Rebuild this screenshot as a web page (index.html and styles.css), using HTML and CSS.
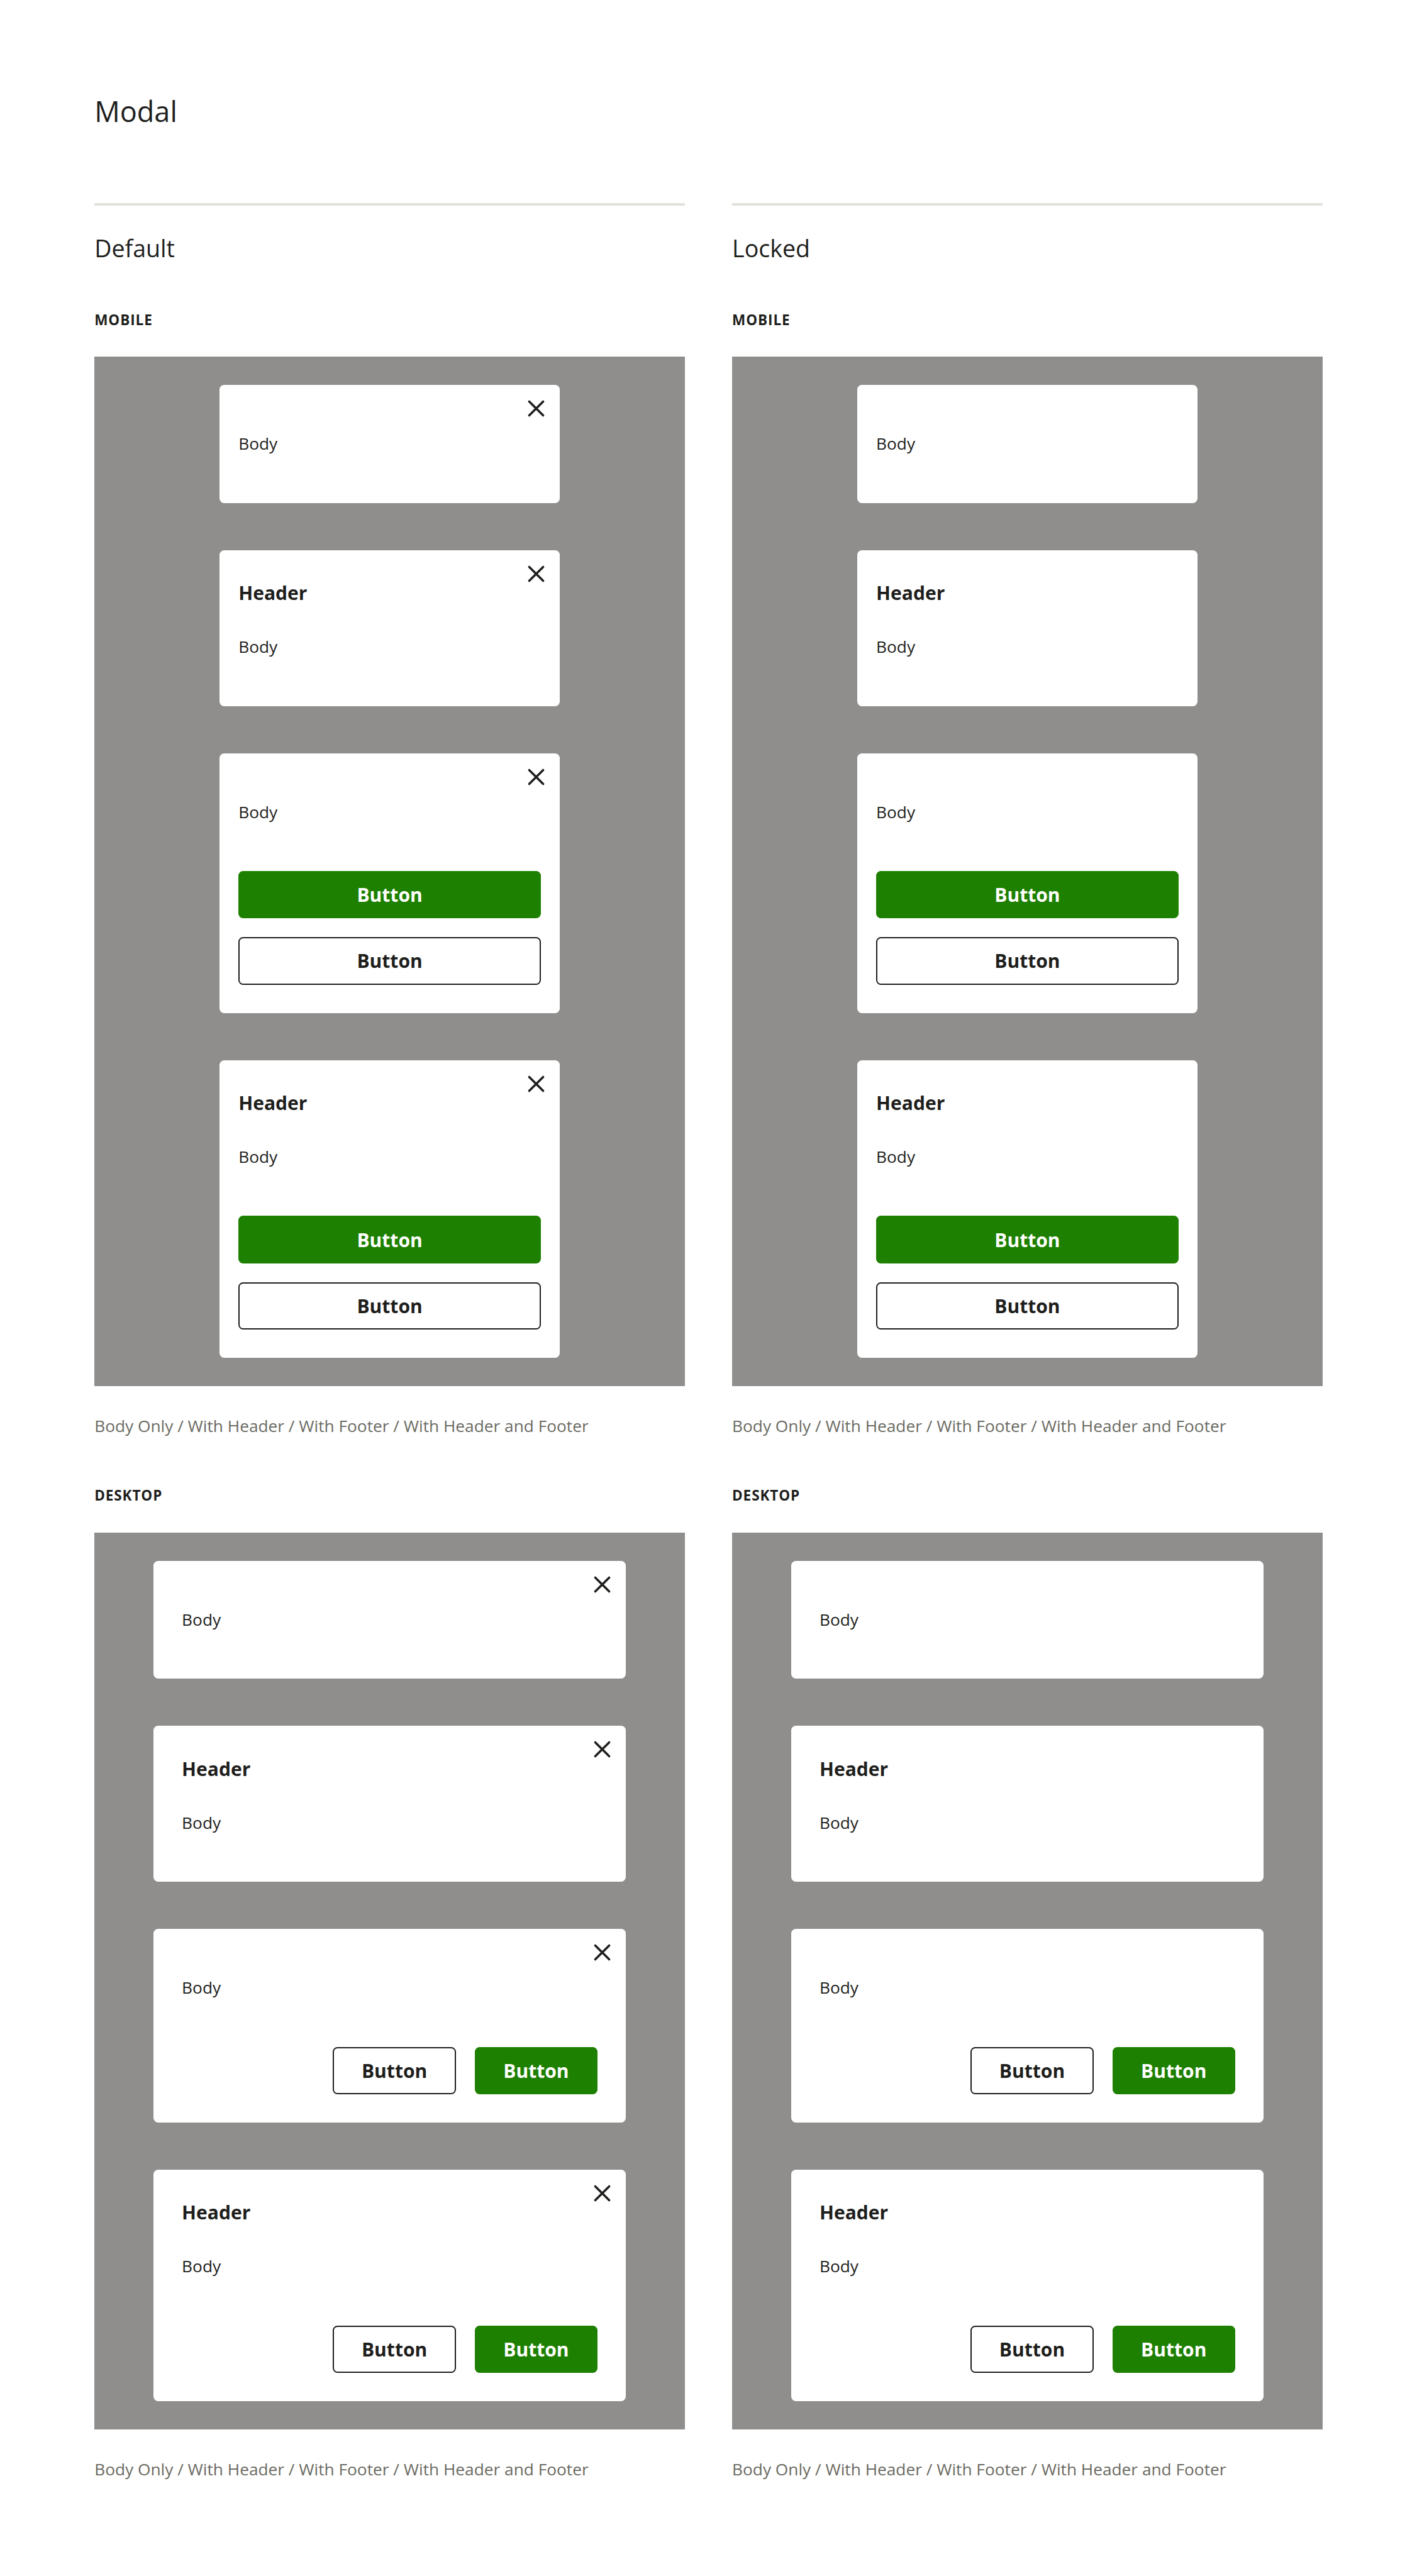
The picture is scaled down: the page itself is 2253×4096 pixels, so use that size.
FILE: index.html
```html
<!DOCTYPE html>
<html lang="en">
<head>
<meta charset="utf-8">
<title>Modal</title>
<link rel="stylesheet" href="styles.css">
</head>
<body>
<svg class="sprite" aria-hidden="true">
  <symbol id="close" viewBox="0 0 24 24">
    <path d="M6.1 6.1 17.9 17.9M17.9 6.1 6.1 17.9" fill="none" stroke="currentColor" stroke-width="1.9" stroke-linecap="round"/>
  </symbol>
</svg>
<main class="page">
  <h1 class="title">Modal</h1>
  <div class="columns">
    <section class="column">
      <h2 class="column-title">Default</h2>
      <h3 class="label">MOBILE</h3>
      <div class="stage mobile">
        <article class="modal">
          <button class="close" aria-label="Close"><svg><use href="#close"/></svg></button>
          <p class="body">Body</p>
        </article>
        <article class="modal">
          <button class="close" aria-label="Close"><svg><use href="#close"/></svg></button>
          <h4 class="header">Header</h4>
          <p class="body">Body</p>
        </article>
        <article class="modal">
          <button class="close" aria-label="Close"><svg><use href="#close"/></svg></button>
          <p class="body">Body</p>
          <footer class="footer"><button class="btn primary">Button</button><button class="btn">Button</button></footer>
        </article>
        <article class="modal">
          <button class="close" aria-label="Close"><svg><use href="#close"/></svg></button>
          <h4 class="header">Header</h4>
          <p class="body">Body</p>
          <footer class="footer"><button class="btn primary">Button</button><button class="btn">Button</button></footer>
        </article>
      </div>
      <p class="caption">Body Only / With Header / With Footer / With Header and Footer</p>
      <h3 class="label">DESKTOP</h3>
      <div class="stage desktop">
        <article class="modal">
          <button class="close" aria-label="Close"><svg><use href="#close"/></svg></button>
          <p class="body">Body</p>
        </article>
        <article class="modal">
          <button class="close" aria-label="Close"><svg><use href="#close"/></svg></button>
          <h4 class="header">Header</h4>
          <p class="body">Body</p>
        </article>
        <article class="modal">
          <button class="close" aria-label="Close"><svg><use href="#close"/></svg></button>
          <p class="body">Body</p>
          <footer class="footer"><button class="btn">Button</button><button class="btn primary">Button</button></footer>
        </article>
        <article class="modal">
          <button class="close" aria-label="Close"><svg><use href="#close"/></svg></button>
          <h4 class="header">Header</h4>
          <p class="body">Body</p>
          <footer class="footer"><button class="btn">Button</button><button class="btn primary">Button</button></footer>
        </article>
      </div>
      <p class="caption">Body Only / With Header / With Footer / With Header and Footer</p>
    </section>
    <section class="column">
      <h2 class="column-title">Locked</h2>
      <h3 class="label">MOBILE</h3>
      <div class="stage mobile">
        <article class="modal">
          <p class="body">Body</p>
        </article>
        <article class="modal">
          <h4 class="header">Header</h4>
          <p class="body">Body</p>
        </article>
        <article class="modal">
          <p class="body">Body</p>
          <footer class="footer"><button class="btn primary">Button</button><button class="btn">Button</button></footer>
        </article>
        <article class="modal">
          <h4 class="header">Header</h4>
          <p class="body">Body</p>
          <footer class="footer"><button class="btn primary">Button</button><button class="btn">Button</button></footer>
        </article>
      </div>
      <p class="caption">Body Only / With Header / With Footer / With Header and Footer</p>
      <h3 class="label">DESKTOP</h3>
      <div class="stage desktop">
        <article class="modal">
          <p class="body">Body</p>
        </article>
        <article class="modal">
          <h4 class="header">Header</h4>
          <p class="body">Body</p>
        </article>
        <article class="modal">
          <p class="body">Body</p>
          <footer class="footer"><button class="btn">Button</button><button class="btn primary">Button</button></footer>
        </article>
        <article class="modal">
          <h4 class="header">Header</h4>
          <p class="body">Body</p>
          <footer class="footer"><button class="btn">Button</button><button class="btn primary">Button</button></footer>
        </article>
      </div>
      <p class="caption">Body Only / With Header / With Footer / With Header and Footer</p>
    </section>
  </div>
</main>
</body>
</html>
```
FILE: styles.css
```css
/* 1rem is ten units of the 1200-unit wide sheet */
html {
  font-size: calc(100vw / 120);
}

*,
*::before,
*::after {
  box-sizing: border-box;
}

body {
  margin: 0;
  background: #fff;
  color: #1e1e1c;
  font-family: "Open Sans", "Noto Sans", sans-serif;
}

h1, h2, h3, h4, p {
  margin: 0;
}

.sprite {
  display: none;
}

.page {
  padding: 8.02rem 8rem 0;
}

.title {
  font-size: 2.4rem;
  line-height: 2.8rem;
  font-weight: 400;
}

.columns {
  display: grid;
  grid-template-columns: 1fr 1fr;
  gap: 4rem;
  margin-top: 6.38rem;
}

.column {
  border-top: 4px solid #e1e1db;
}

.column-title {
  margin-top: 2.26rem;
  font-size: 2rem;
  line-height: 2.8rem;
  font-weight: 400;
}

.label {
  margin: 3.82rem 0 2.3rem;
  font-size: 1.2rem;
  line-height: 1.6rem;
  font-weight: 700;
  letter-spacing: 0.04em;
}

.caption {
  margin-top: 2.4rem;
  color: #6b6b63;
  font-size: 1.4rem;
  line-height: 2rem;
}

.caption + .label {
  margin-top: 4.1rem;
}

.stage {
  display: flex;
  flex-direction: column;
  align-items: center;
  gap: 4rem;
  padding: 2.4rem 0;
  background: #8f8e8c;
}

.modal {
  position: relative;
  padding: 0 1.6rem;
  border-radius: 0.4rem;
  background: #fff;
}

.mobile .modal {
  width: 28.8rem;
}

.desktop .modal {
  width: 40rem;
  padding: 0 2.4rem;
}

.close {
  position: absolute;
  top: 0.8rem;
  right: 0.8rem;
  display: block;
  width: 2.4rem;
  height: 2.4rem;
  padding: 0;
  border: 0;
  background: none;
  color: inherit;
}

.close svg {
  display: block;
  width: 100%;
  height: 100%;
}

.header {
  padding-top: 2.4rem;
  font-size: 1.6rem;
  line-height: 2.4rem;
  font-weight: 700;
}

.body {
  padding: 4rem 0;
  font-size: 1.4rem;
  line-height: 2rem;
}

.header + .body {
  padding-top: 2.4rem;
}

.footer {
  display: flex;
  gap: 1.6rem;
  padding-bottom: 2.4rem;
}

.mobile .footer {
  flex-direction: column;
}

.desktop .footer {
  justify-content: flex-end;
}

.btn {
  height: 4rem;
  padding: 0;
  border: 2px solid #1e1e1c;
  border-radius: 0.4rem;
  background: #fff;
  color: #1e1e1c;
  font: 700 1.6rem/2.4rem "Open Sans", "Noto Sans", sans-serif;
}

.desktop .btn {
  width: 10.4rem;
}

.btn.primary {
  border-color: #1e8000;
  background: #1e8000;
  color: #fff;
}
```
